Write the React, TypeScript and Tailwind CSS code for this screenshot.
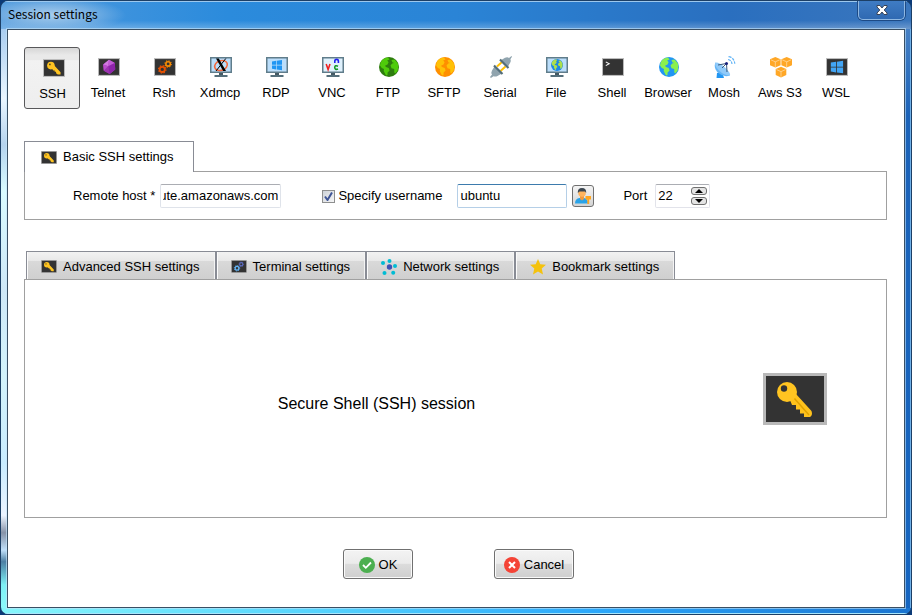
import { useEffect, useRef, useState } from "react";
import type { ReactNode } from "react";

const Terminal = ({ className, children }: { className: string; children?: ReactNode }) => (
  <svg viewBox="0 0 64 52" className={className} aria-hidden="true">
    <rect width="64" height="52" fill="#b9b9b9" />
    <rect x="3" y="3" width="58" height="46" fill="#333333" />
    {children}
  </svg>
);

const KeyIcon = ({ className }: { className: string }) => (
  <Terminal className={className}>
    <path d="M27 27 33 21 48.500 38Q50 42 47 44H41V40.500H37V36.500H33V32H29Z" fill="#ffc21c" />
    <path d="M31 25 46 42" stroke="#e0a200" strokeWidth="1.500" />
    <circle cx="24" cy="19" r="10" fill="#ffc421" />
    <circle cx="21" cy="15.500" r="3.200" fill="#333333" />
  </Terminal>
);

const SmallKeyIcon = ({ className }: { className: string }) => (
  <Terminal className={className}>
    <path d="M25 27 33 19 51 38V45H43L38 41V37H34V33H30Z" fill="#ffc421" />
    <circle cx="23" cy="19" r="11" fill="#ffc421" />
    <circle cx="20" cy="15.500" r="2.600" fill="#5a4a1c" />
  </Terminal>
);

const Gear = ({ x, y, r, color }: { x: number; y: number; r: number; color: string }) => (
  <g transform={`translate(${x} ${y})`} fill="none" stroke={color}>
    <circle r={r} strokeWidth={r * 0.7} />
    <circle r={r * 1.45} strokeWidth={r * 0.45} strokeDasharray={`${r * 0.57} ${r * 0.569}`} />
  </g>
);

const GearsIcon = ({ className, big, small }: { className: string; big: string; small: string }) => (
  <Terminal className={className}>
    <Gear x={24} y={33} r={7.5} color={big} />
    <Gear x={41} y={17} r={6.5} color={small} />
  </Terminal>
);

const TelnetIcon = () => (
  <Terminal className="h-[18px] w-[22px]">
    <path d="M32 5 49 14 50 33 34 46 17 37 15 19Z" fill="#a83abb" />
    <path d="M32 5 15 19 30 24Z" fill="#d07ae0" />
    <path d="M32 5 49 14 30 24Z" fill="#c25bd6" />
    <path d="M15 19 30 24 17 37Z" fill="#b94dcc" />
    <path d="M30 24 34 46 17 37Z" fill="#9c35b0" />
    <path d="M49 14 50 33 34 46 30 24Z" fill="#8e24aa" />
  </Terminal>
);

const ShellIcon = () => (
  <Terminal className="h-[18px] w-[22px]">
    <path d="m11 11 10 5.500L11 22" fill="none" stroke="#ffffff" strokeWidth="3" />
  </Terminal>
);

const WinLogo = ({ color }: { color: string }) => (
  <path d="M0 1.500 4.500.800V5H0ZM5.200.700 10.500 0V5H5.200ZM0 5.700H4.500V9.900L0 9.200ZM5.200 5.700H10.500V10.700L5.200 10Z" fill={color} />
);

const WslIcon = () => (
  <Terminal className="h-[18px] w-[22px]">
    <g transform="translate(14 8) scale(3.4)">
      <WinLogo color="#42a5f5" />
    </g>
  </Terminal>
);

const Monitor = ({ screen, children }: { screen: string; children: ReactNode }) => (
  <svg viewBox="0 0 22 20" className="h-5 w-[22px]" aria-hidden="true">
    <path d="M0 0H22V16H0Z" fill="#607d8b" />
    <path d="M1.500 1.500H20.500V14.500H1.500Z" fill={screen} />
    <path d="M9 16H13V18H9Z" fill="#455a64" />
    <path d="M4.500 18H17.500V20H4.500Z" fill="#546e7a" />
    {children}
  </svg>
);

const XdmcpIcon = () => (
  <Monitor screen="#bbdefb">
    <ellipse cx="11" cy="8.500" rx="6.500" ry="4.800" fill="none" stroke="#f4683c" strokeWidth="1.600" transform="rotate(-20 11 8.500)" />
    <path d="M6 1.500H8.800L16 14H13.200Z" fill="#000000" />
    <path d="M15.800 1.500 6 14" stroke="#000000" strokeWidth="1" />
  </Monitor>
);

const RdpIcon = () => (
  <Monitor screen="#bbdefb">
    <g transform="translate(6 3) scale(.95)">
      <WinLogo color="#2196f3" />
    </g>
  </Monitor>
);

const VncIcon = () => (
  <Monitor screen="#dff1fd">
    <g fill="none" strokeWidth="1.600">
      <path d="m4.200 7 1.900 5.500L8 7" stroke="#ee2222" />
      <path d="M12.800 6V4.200a1.800 1.800 0 0 1 3.600 0V6" stroke="#2222ee" />
      <path d="M16 9.200q-3-1.400-3.300 1.300.300 2.700 3.300 1.500" stroke="#119922" />
    </g>
  </Monitor>
);

// continents on a circle of radius 10
const Land = ({ color }: { color: string }) => (
  <g fill={color}>
    <path d="M9 .6Q4 1 1.800 5L1 8.500 2.800 11 5 12 4.700 14 7 18.500 8.500 18 8.600 15.500 10.600 13.500 9.700 11 7 10 6 8.700 8.500 7.500 9.600 5.200 8.200 3.500 10.500 2.500Z" />
    <path d="M12.500 3 15.500 2.600Q19 5.500 19.400 9L18.700 13.500 16.300 16.500 15.300 15.500 15.200 12 12.500 11.300 11.500 8.500 13.200 6.500 15 6 13.300 5.200Z" />
  </g>
);

const Globe = ({ sea, land }: { sea: string; land: string }) => (
  <svg viewBox="0 0 20 20" className="h-5 w-5" aria-hidden="true">
    <circle cx="10" cy="10" r="10" fill={sea} />
    <Land color={land} />
  </svg>
);

const FileIcon = () => (
  <Monitor screen="#bbdefb">
    <g transform="translate(5 2) scale(.6)">
      <circle cx="10" cy="10" r="10" fill="#1e88e5" />
      <Land color="#aee04a" />
    </g>
  </Monitor>
);

const SerialIcon = () => (
  <svg viewBox="0 0 22 22" className="h-[22px] w-[22px]" aria-hidden="true">
    <path d="m7 10.500 5-4.500M10.500 15l5-4.500" stroke="#ffc107" strokeWidth="2" />
    <path d="M10.500 4.500 15 1.800Q17.500.700 19 2L21.500 0 22 .800 20.400 3.200Q21.300 5 20 7L17.500 11.500Z" fill="#90a4ae" />
    <path d="m10 3.500 8.500 8.500" stroke="#546e7a" strokeWidth="2.200" />
    <path d="M4.500 10.500 2 14.500Q.800 16.500 2 18.500L0 21 .900 22 3.500 20.200Q5.500 21 7.500 20L11.800 17.500Z" fill="#90a4ae" />
    <path d="m4 9.500 8.500 8.500" stroke="#546e7a" strokeWidth="2.200" />
  </svg>
);

const MoshIcon = () => (
  <svg viewBox="0 0 22 22" className="h-[22px] w-[22px]" aria-hidden="true">
    <path d="M3 17 8 15.500 10 22H2.500Z" fill="#2196f3" />
    <path d="M1.500 6.500Q-1 12 4.500 17T16 19.500Z" fill="#64b5f6" />
    <path d="M1.500 6.500Q5 6 11 11.500T16 19.500Q10 19.500 5 14.500T1.500 6.500Z" fill="#90caf9" />
    <path d="M4 9 12.500 7.500 13 16M8 12l4.500-4.500" fill="none" stroke="#37577a" strokeWidth="1" />
    <circle cx="12.500" cy="7.500" r="1.500" fill="#1a237e" />
    <path d="M14 3.500q3.500.500 4 4.500M14.500.700q5.500.500 6.300 7" fill="none" stroke="#64b5f6" strokeWidth="1.200" strokeDasharray="3 1" />
  </svg>
);

const Cube = ({ x, y }: { x: number; y: number }) => (
  <g transform={`translate(${x} ${y})`}>
    <path d="m5.300 0 5.300 2.300v6L5.300 10.600 0 8.300V2.300Z" fill="#ffa726" />
    <path d="m.800 2.800 4.500 2 4.500-2M5.300 4.800V10" fill="none" stroke="#ffe0b0" strokeWidth=".7" />
  </g>
);

const S3Icon = () => (
  <svg viewBox="0 0 22 21" className="h-[21px] w-[22px]" aria-hidden="true">
    <Cube x={0} y={0} />
    <Cube x={11.4} y={0} />
    <Cube x={5.7} y={9.8} />
  </svg>
);

const NetworkIcon = () => (
  <svg viewBox="0 0 16 16" className="h-4 w-4" aria-hidden="true">
    <circle cx="8.500" cy="8" r="2.700" fill="#3f51b5" />
    <g fill="#00bcd4">
      <circle cx="8.500" cy="2" r="2" />
      <circle cx="2" cy="4" r="2" />
      <circle cx="14" cy="7" r="2" />
      <circle cx="3.500" cy="14" r="2" />
      <circle cx="12.200" cy="13.800" r="2" />
    </g>
  </svg>
);

const StarIcon = () => (
  <svg viewBox="0 0 16 16" className="h-4 w-4" aria-hidden="true">
    <path d="m8 0 2.300 5.200 5.700.500-4.300 3.900L13 15.500 8 12.500 3 15.500 4.300 9.600 0 5.700 5.700 5.200Z" fill="#f4c20d" />
  </svg>
);

const UserKeyIcon = () => (
  <svg viewBox="0 0 18 18" className="h-[18px] w-[18px]" aria-hidden="true">
    <path d="M1 16.500Q1 11.500 5.500 11H10Q14 11.500 14 16.500Z" fill="#29a3e8" />
    <path d="M6 9h4v3L8 13.500 6 12Z" fill="#f09a3e" />
    <circle cx="8" cy="6" r="3.800" fill="#ffb45e" />
    <path d="M3.800 6Q3.500 1 8 1T12.200 6L11 4.500H5.500Z" fill="#3b4650" />
    <path d="M11.500 9H17V12.500H15.200V17H13.300V12.500H11.500Z" fill="#ffa51f" />
  </svg>
);

const OkIcon = () => (
  <svg viewBox="0 0 16 16" className="h-4 w-4" aria-hidden="true">
    <circle cx="8" cy="8" r="8" fill="#4caf50" />
    <path d="m4 8 2.800 2.800L12 5.500" fill="none" stroke="#ffffff" strokeWidth="1.800" />
  </svg>
);

const CancelIcon = () => (
  <svg viewBox="0 0 16 16" className="h-4 w-4" aria-hidden="true">
    <circle cx="8" cy="8" r="8" fill="#f44336" />
    <path d="m5 5 6 6m0-6-6 6" stroke="#ffffff" strokeWidth="2" />
  </svg>
);

const sessions = [
  { name: "SSH", icon: <SmallKeyIcon className="h-[18px] w-[22px]" /> },
  { name: "Telnet", icon: <TelnetIcon /> },
  { name: "Rsh", icon: <GearsIcon className="h-[18px] w-[22px]" big="#e65100" small="#fb8c00" /> },
  { name: "Xdmcp", icon: <XdmcpIcon /> },
  { name: "RDP", icon: <RdpIcon /> },
  { name: "VNC", icon: <VncIcon /> },
  { name: "FTP", icon: <Globe sea="#2e7d0e" land="#4fcb0b" /> },
  { name: "SFTP", icon: <Globe sea="#ff8f00" land="#ffc107" /> },
  { name: "Serial", icon: <SerialIcon /> },
  { name: "File", icon: <FileIcon /> },
  { name: "Shell", icon: <ShellIcon /> },
  { name: "Browser", icon: <Globe sea="#2196f3" land="#8bf04e" /> },
  { name: "Mosh", icon: <MoshIcon /> },
  { name: "Aws S3", icon: <S3Icon /> },
  { name: "WSL", icon: <WslIcon /> },
];

const tabs = [
  { name: "Advanced SSH settings", icon: <SmallKeyIcon className="h-[13px] w-4" /> },
  { name: "Terminal settings", icon: <GearsIcon className="h-[13px] w-4" big="#64b5f6" small="#5c6bc0" /> },
  { name: "Network settings", icon: <NetworkIcon /> },
  { name: "Bookmark settings", icon: <StarIcon /> },
];

const TitleBar = () => (
  <header className="flex h-7 items-start justify-between bg-[radial-gradient(ellipse_75px_18px_at_50px_14px,#a9cdec_0%,#8fbde6aa_55%,transparent_100%),linear-gradient(to_bottom,transparent_70%,#ffffff40_100%),linear-gradient(to_right,#4f9ade_0%,#2b8bdc_25%,#2a84d6_50%,#2a6fbf_80%,#3a76bd_100%)] pl-[7px] pr-[6px] shadow-[inset_0_1px_0_#9cc8ee]">
    <h1 className="mt-[5px] font-['Noto_Sans_CJK_KR',sans-serif] text-[12px] leading-4">Session settings</h1>
    <button
      type="button"
      aria-label="Close"
      className="flex h-[19px] w-[47px] items-center justify-center rounded-b-[5px] border border-t-0 border-[#8fb8e2] bg-linear-to-b from-[#3f7cc4] to-[#2f69b2] shadow-[0_0_0_1px_#1d4a85]"
    >
      <svg viewBox="0 0 12 10" className="h-[10px] w-3">
        <path d="M1 .500H4L6 3 8 .500H11V2L8.200 5 11 8V9.500H8L6 7 4 9.500H1V8L3.800 5 1 2Z" fill="#ffffff" stroke="#3b4354" />
      </svg>
    </button>
  </header>
);

const App = () => {
  const [session, setSession] = useState("SSH");
  const [useName, setUseName] = useState(true);
  const [port, setPort] = useState(22);
  const hostRef = useRef<HTMLInputElement>(null);

  // keep the end of a long host name in view
  useEffect(() => {
    if (hostRef.current) hostRef.current.scrollLeft = hostRef.current.scrollWidth;
  }, []);

  return (
    <div className="flex min-h-screen bg-[#0b3a78] font-['Liberation_Sans',Arial,sans-serif] text-[13px] leading-4 text-black">
      <div className="flex flex-1 flex-col overflow-hidden rounded-lg border border-[#1c3f66]">
        <TitleBar />
        <div className="flex flex-1">
          <div className="w-[6px] bg-[linear-gradient(to_bottom,#a9cdf0_0%,#eaf6ff_12%,#b5d3ee_20%,#d9fbff_28%,#cfe8f7_45%,#d3f3fb_60%,#c9ecff_75%,#ecf4ff_84%,#8793a8_87%,#c0e0fa_90%,#4c7fa3_92%,#7df0f5_96%,#8cf8fa_100%)]" />
          <main className="relative flex flex-1 flex-col border border-[#3a4f63] bg-white px-4 pb-7 pt-[17px] shadow-[0_0_0_1px_#c4e4fa99]">
            <nav className="flex">
              {sessions.map(({ name, icon }) => (
                <button
                  key={name}
                  type="button"
                  onClick={() => setSession(name)}
                  className={`flex h-[62px] w-14 flex-col items-center whitespace-nowrap rounded-[3px] border ${
                    session === name
                      ? "border-[#58585a] bg-[linear-gradient(to_bottom,#d6d6d6_0%,#e9e9e9_12%,#e9e9e9_20%,#f2f2f2_21%,#eeeeee_100%)] pl-px pt-[8px]"
                      : "border-transparent pt-[7px]"
                  }`}
                >
                  <span className="mb-[6px] ml-[2px] flex h-6 items-center">{icon}</span>
                  {name}
                </button>
              ))}
            </nav>

            <section className="mt-8">
              <div className="relative -mb-px flex h-[31px] w-fit items-center gap-[6px] border border-b-0 border-[#898c95] bg-white pl-4 pr-[19px]">
                <SmallKeyIcon className="h-[13px] w-4" />
                <h2>Basic SSH settings</h2>
              </div>
              <form className="mr-px flex items-center border border-[#a0a0a0] pb-[11px] pl-12 pt-3">
                <label htmlFor="host">Remote host *</label>
                <input
                  id="host"
                  ref={hostRef}
                  defaultValue="compute.amazonaws.com"
                  className="ml-[5px] h-6 w-[121px] rounded-[2px] border border-[#dfe3ea] border-t-[#abadb3] px-[2px] pb-[2px]"
                />
                <label className="ml-[41px] flex items-center gap-[3px]">
                  <input
                    type="checkbox"
                    checked={useName}
                    onChange={(e) => setUseName(e.target.checked)}
                    className="peer sr-only"
                  />
                  <span className="flex h-[13px] w-[13px] items-center justify-center border border-[#8e8f8f] bg-linear-to-br from-[#cdd2d8] to-[#f6f6f6]">
                    {useName && (
                      <svg viewBox="0 0 9 9" className="h-[9px] w-[9px]" aria-hidden="true">
                        <path d="M1 4.500 3.500 8 8 .500" fill="none" stroke="#3f5596" strokeWidth="2" />
                      </svg>
                    )}
                  </span>
                  Specify username
                </label>
                <input
                  aria-label="Username"
                  defaultValue="ubuntu"
                  className="ml-[15px] h-6 w-[110px] rounded-[2px] border border-[#b5cfe7] border-t-[#3d7bad] px-[2px] pb-[2px]"
                />
                <button
                  type="button"
                  aria-label="Manage users"
                  className="ml-[5px] flex h-[22px] w-[22px] items-center justify-center rounded-[3px] border border-[#707070] bg-linear-to-b from-[#f4f4f4] to-[#d4d4d4]"
                >
                  <UserKeyIcon />
                </button>
                <label htmlFor="port" className="ml-[29px]">
                  Port
                </label>
                <div className="ml-2 flex h-6 w-[55px] items-center rounded-[2px] border border-[#e2e3ea] border-t-[#abadb3] px-[2px]">
                  <input
                    id="port"
                    inputMode="numeric"
                    value={port}
                    onChange={(e) => setPort(Number(e.target.value) || 0)}
                    className="w-full min-w-0 flex-1"
                  />
                  <div className="flex flex-col gap-[2px]">
                    {[1, -1].map((step) => (
                      <button
                        key={step}
                        type="button"
                        aria-label={step > 0 ? "Increase port" : "Decrease port"}
                        onClick={() => setPort(port + step)}
                        className="flex h-2 w-4 items-center justify-center rounded-[3px] border border-[#707070] bg-[#e4e4e4]"
                      >
                        <svg viewBox="0 0 8 4" className="h-1 w-2">
                          <path d={step > 0 ? "M0 4 4 0 8 4Z" : "M0 0H8L4 4Z"} />
                        </svg>
                      </button>
                    ))}
                  </div>
                </div>
              </form>
            </section>

            <section className="mr-px mt-[31px] flex flex-1 flex-col">
              <div className="flex pl-[2px]">
                {tabs.map(({ name, icon }) => (
                  <button
                    key={name}
                    type="button"
                    className="flex h-7 items-center gap-[6px] border border-b-0 border-[#898c95] bg-[linear-gradient(to_bottom,#f2f2f2_0%,#e8e8e8_33%,#d9d9d9_34%,#cfcfcf_100%)] pl-[14px] pr-[15px] pt-[2px] shadow-[inset_1px_0_0_#fbfbfb,inset_-1px_0_0_#f4f4f4]"
                  >
                    {icon}
                    {name}
                  </button>
                ))}
              </div>
              <div className="flex flex-1 items-center border border-[#a0a0a0] pr-[59px]">
                <p className="mr-[35px] flex-1 pt-[10px] text-center text-[16px] leading-6">Secure Shell (SSH) session</p>
                <KeyIcon className="h-[52px] w-16" />
              </div>
            </section>

            <footer className="mx-auto mt-[31px] grid w-[312px] grid-cols-2 justify-items-center">
              <button
                type="button"
                className="flex h-[30px] items-center gap-1 rounded-[3px] border border-[#707070] bg-[linear-gradient(to_bottom,#f3f3f3_0%,#ebebeb_48%,#dcdcdc_49%,#cfcfcf_100%)] px-[15px] pt-px shadow-[inset_0_0_0_1px_#fafafa]"
              >
                <OkIcon />
                OK
              </button>
              <button
                type="button"
                className="flex h-[30px] items-center gap-1 rounded-[3px] border border-[#707070] bg-[linear-gradient(to_bottom,#f3f3f3_0%,#ebebeb_48%,#dcdcdc_49%,#cfcfcf_100%)] px-[9px] pt-px shadow-[inset_0_0_0_1px_#fafafa]"
              >
                <CancelIcon />
                Cancel
              </button>
            </footer>
          </main>
          <div className="w-[6px] bg-[linear-gradient(to_bottom,#4680c4_0%,#1b62b8_15%,#1565c0_100%)] shadow-[inset_-1px_0_0_#6fb0e8]" />
        </div>
        <div className="h-[6px] bg-[linear-gradient(to_right,#86f6fb_0%,#55d3fd_35%,#2ba8fb_65%,#1a74d0_100%)] shadow-[inset_0_-1px_0_#a9e6fb]" />
      </div>
    </div>
  );
};

export default App;
